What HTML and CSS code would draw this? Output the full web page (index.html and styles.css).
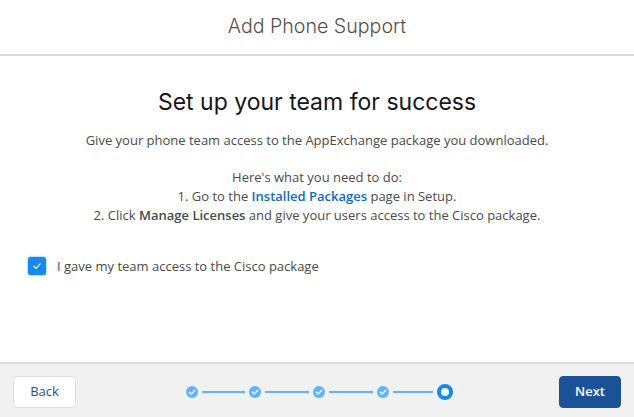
FILE: index.html
```html
<!DOCTYPE html>
<html lang="en">
<head>
<meta charset="utf-8">
<title>Add Phone Support</title>
<link rel="stylesheet" href="styles.css">
</head>
<body>
<div class="modal">
  <header class="header"><h1 class="header-title">Add Phone Support</h1></header>
  <main class="content">
    <h2 class="headline">Set up your team for success</h2>
    <p class="intro">Give your phone team access to the AppExchange package you downloaded.</p>
    <p class="steps-text">Here's what you need to do:<br>
    1. Go to the <a class="link" href="#">Installed Packages</a> page in Setup.<br>
    2. Click <b class="strong">Manage Licenses</b> and give your users access to the Cisco package.</p>
    <label class="check-row">
      <span class="checkbox"><svg viewBox="0 0 12 12" width="10" height="10"><path d="M2.2 6.4 4.8 8.8 9.8 3.4" fill="none" stroke="#fff" stroke-width="1.5" stroke-linecap="round" stroke-linejoin="round"/></svg></span>
      <span class="check-label">I gave my team access to the Cisco package</span>
    </label>
  </main>
  <footer class="footer">
    <button class="btn btn-back" type="button">Back</button>
    <div class="progress">
      <span class="dot"><svg viewBox="0 0 12 12" width="12" height="12"><path d="M3.3 6.2 5.2 8 8.8 4.2" fill="none" stroke="#fff" stroke-width="1.4" stroke-linecap="round" stroke-linejoin="round"/></svg></span>
      <span class="line"></span>
      <span class="dot"><svg viewBox="0 0 12 12" width="12" height="12"><path d="M3.3 6.2 5.2 8 8.8 4.2" fill="none" stroke="#fff" stroke-width="1.4" stroke-linecap="round" stroke-linejoin="round"/></svg></span>
      <span class="line line-long"></span>
      <span class="dot"><svg viewBox="0 0 12 12" width="12" height="12"><path d="M3.3 6.2 5.2 8 8.8 4.2" fill="none" stroke="#fff" stroke-width="1.4" stroke-linecap="round" stroke-linejoin="round"/></svg></span>
      <span class="line line-long"></span>
      <span class="dot"><svg viewBox="0 0 12 12" width="12" height="12"><path d="M3.3 6.2 5.2 8 8.8 4.2" fill="none" stroke="#fff" stroke-width="1.4" stroke-linecap="round" stroke-linejoin="round"/></svg></span>
      <span class="line line-last"></span>
      <span class="dot-active"></span>
    </div>
    <button class="btn btn-next" type="button">Next</button>
  </footer>
</div>
</body>
</html>
```
FILE: styles.css
```css
* { box-sizing: border-box; }
html, body { margin: 0; padding: 0; }
body { width: 634px; height: 417px; overflow: hidden; background: #fff; font-family: "Open Sans", "Liberation Sans", sans-serif; color: #4a4a48; }
.modal { display: flex; flex-direction: column; height: 417px; }
.header { height: 56px; border-bottom: 2px solid #dddbda; display: flex; align-items: center; justify-content: center; padding-bottom: 2px; }
.header-title { margin: 0; font-family: Inter, "Liberation Sans", sans-serif; font-weight: 300; font-size: 19.6px; color: #514f4d; }
.content { flex: 1; padding: 32px 0 0; text-align: center; }
.headline { margin: 0; font-family: Inter, "Liberation Sans", sans-serif; font-weight: 400; font-size: 23px; line-height: 28px; color: #16161a; }
.intro { margin: 15px 0 0; font-size: 13px; line-height: 19px; }
.steps-text { margin: 18px 0 0; font-size: 13px; line-height: 19px; }
.link { color: #0b6cc2; font-weight: 600; text-decoration: none; }
.strong { font-weight: 600; }
.check-row { display: flex; align-items: center; gap: 11px; margin: 32px 0 0 28px; text-align: left; }
.checkbox { width: 18px; height: 18px; border-radius: 3px; background: #1589ee; box-shadow: 0 0 2px #1589ee; display: flex; align-items: center; justify-content: center; }
.check-label { font-size: 13px; line-height: 18px; }
.footer { height: 55px; background: #f1f1f1; border-top: 2px solid #dddbda; display: flex; align-items: center; justify-content: space-between; padding: 3px 13px 0; }
.btn { width: 63px; height: 32px; padding: 0 0 2px; border-radius: 4px; font-family: "Open Sans", "Liberation Sans", sans-serif; font-size: 13px; }
.btn-back { background: #fff; border: 1px solid #dddbda; color: #1b5297; }
.btn-next { width: 62px; background: #1b5297; border: 1px solid #1b5297; color: #fff; font-weight: 600; }
.progress { display: flex; align-items: center; gap: 4px; margin-left: 4px; }
.dot { width: 12px; height: 12px; border-radius: 50%; background: #5eb4ff; display: flex; }
.line { width: 43px; height: 2px; background: #5eb4ff; }
.line-long { width: 44px; }
.line-last { width: 40px; }
.dot-active { width: 16px; height: 16px; border-radius: 50%; background: #fff; border: 4px solid #1589ee; }
```
